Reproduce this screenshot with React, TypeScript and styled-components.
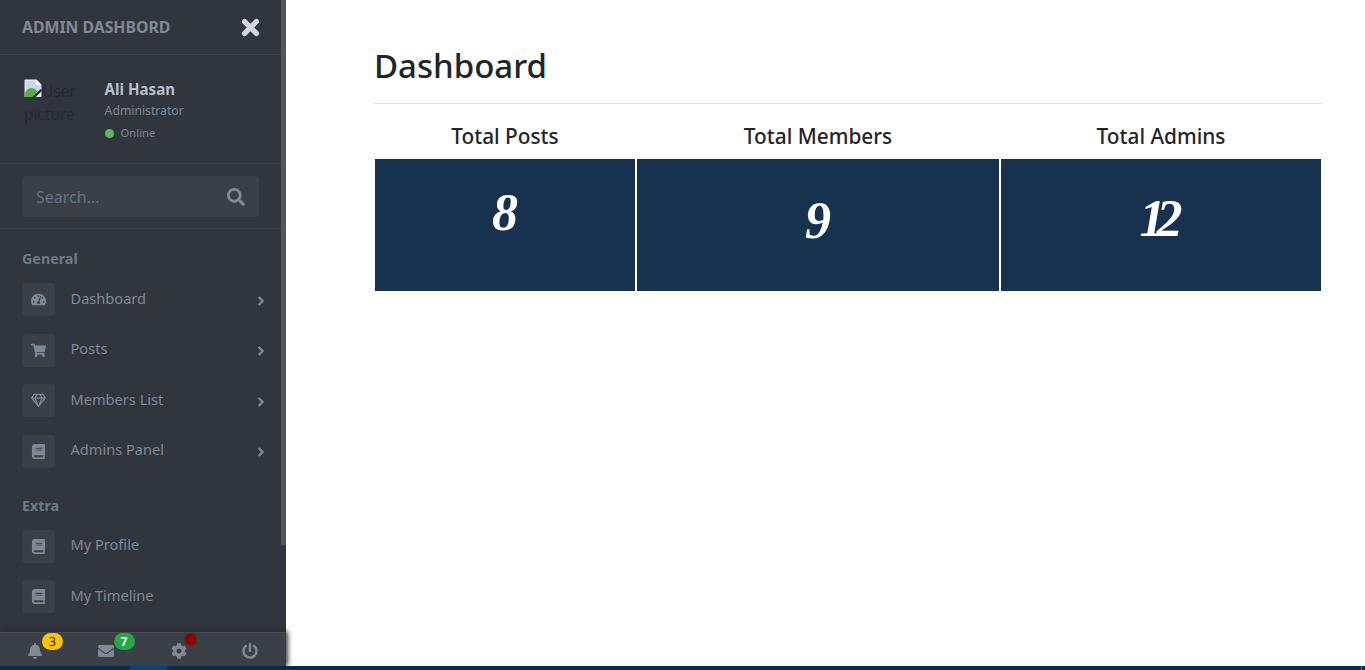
import React from "react";
import styled, { createGlobalStyle } from "styled-components";
import {
  FaBell, FaBook, FaChevronRight, FaCog, FaEnvelope, FaRegGem, FaPowerOff,
  FaSearch, FaShoppingCart, FaTachometerAlt,
} from "react-icons/fa";

const Global = createGlobalStyle`
  html, body { margin: 0; padding: 0; height: 100%; overflow: hidden; background: #fff; }
  body { font-family: "Noto Sans", "Open Sans", sans-serif; color: #212529; }
  #root { height: 100%; }
  * { box-sizing: border-box; }
`;

const Page = styled.div`
  display: flex;
  flex-direction: column;
  height: 670px;
`;
const Body = styled.div`
  display: flex;
  flex: 1;
  min-height: 0;
`;
const Sidebar = styled.aside`
  width: 286px;
  flex: none;
  display: flex;
  flex-direction: column;
  background: #31353d;
  position: relative;
`;
const ScrollArea = styled.div`
  flex: 1;
  min-height: 0;
  display: flex;
`;
const SideContent = styled.div`
  width: 281px;
  flex: none;
`;
const Track = styled.div`
  width: 5px;
  flex: none;
`;
const Thumb = styled.div`
  height: 545px;
  background: #525965;
`;
const Brand = styled.div`
  height: 55px;
  padding: 0 26px 0 22px;
  display: flex;
  align-items: center;
  justify-content: space-between;
  border-bottom: 1px solid #3a3f48;
  margin-right: -5px;
`;
const BrandName = styled.span`
  font-size: 15.8px;
  font-weight: 700;
  color: #818896;
`;
const CloseIcon = styled.svg`
  width: 19px;
  height: 19px;
  display: block;
`;
const UserPanel = styled.div`
  height: 109px;
  padding: 24px 0 0 24px;
  display: flex;
  border-bottom: 1px solid #3a3f48;
  margin-right: -5px;
`;
const Avatar = styled.div`
  width: 59px;
  flex: none;
  margin-right: 21.6px;
  padding-top: 1px;
  font-size: 15.4px;
  line-height: 23px;
  color: #262a30;
  font-weight: 400;
`;
const BrokenIcon = styled.svg`
  width: 18px;
  height: 18px;
  vertical-align: top;
  margin-top: -1px;
`;
const UserInfo = styled.div`
  display: flex;
  flex-direction: column;
`;
const UserName = styled.strong`
  font-size: 15.1px;
  line-height: 20px;
  color: #b8bfce;
`;
const UserRole = styled.span`
  font-size: 12.2px;
  line-height: 17px;
  margin-top: 3px;
  color: #818896;
`;
const UserStatus = styled.span`
  display: flex;
  align-items: center;
  gap: 7px;
  font-size: 11.2px;
  line-height: 16px;
  margin-top: 6px;
  color: #818896;
`;
const StatusDot = styled.i`
  width: 9px;
  height: 9px;
  border-radius: 50%;
  background: #5cb85c;
`;
const SearchPanel = styled.div`
  height: 65px;
  padding: 12px 27px 0 22px;
  border-bottom: 1px solid #3a3f48;
  margin-right: -5px;
`;
const SearchBox = styled.div`
  height: 41px;
  border-radius: 4px;
  background: #3a3f48;
  display: flex;
  align-items: center;
  justify-content: space-between;
  padding: 0 14px;
`;
const SearchHint = styled.span`
  font-size: 16px;
  color: #6a7180;
`;
const SearchIcon = styled.span`
  display: flex;
  font-size: 18px;
  color: #818896;
`;
const MenuHeader = styled.div<{ $top: number }>`
  margin-top: ${(p) => p.$top}px;
  padding-left: 22px;
  height: 20px;
  line-height: 20px;
  font-size: 14.3px;
  font-weight: 700;
  color: #6c7b88;
`;
const MenuList = styled.nav`
  margin-top: 14px;
  display: flex;
  flex-direction: column;
  gap: 17.6px;
`;
const MenuRow = styled.div`
  height: 33px;
  padding: 0 16px 0 22px;
  display: flex;
  align-items: center;
`;
const MenuIcon = styled.span`
  width: 33px;
  height: 33px;
  border-radius: 4px;
  flex: none;
  background: #3a3f48;
  color: #818896;
  display: flex;
  align-items: center;
  justify-content: center;
  font-size: 15px;
`;
const MenuLabel = styled.span`
  flex: 1;
  margin-left: 15.5px;
  margin-top: -4px;
  font-size: 14.6px;
  color: #818896;
`;
const MenuArrow = styled.span`
  display: flex;
  font-size: 10px;
  margin: 2px -1px 0 0;
  color: #818896;
  svg { stroke: currentColor; stroke-width: 50; }
`;
const Footer = styled.footer`
  height: 34px;
  flex: none;
  display: flex;
  background: #3a3f48;
  border-top: 1px solid #464a52;
  box-shadow: 0 -1px 5px #282c33, 2px 0 5px rgba(40, 44, 51, 0.6);
  position: relative;
`;
const FooterItem = styled.div`
  flex: 0 0 25%;
  display: flex;
  align-items: center;
  justify-content: center;
  color: #818896;
  font-size: 16px;
  padding-top: 2px;
  position: relative;
  &:nth-child(-n + 2) { padding-right: 2px; }
`;
const Badge = styled.span<{ $bg: string; $fg: string; $weight: number }>`
  position: absolute;
  top: 0;
  left: 42px;
  width: 21px;
  height: 17px;
  border-radius: 9px;
  background: ${(p) => p.$bg};
  color: ${(p) => p.$fg};
  font-size: 12px;
  font-weight: ${(p) => p.$weight};
  line-height: 17px;
  text-align: center;
`;
const Dot = styled.span`
  position: absolute;
  top: 1px;
  left: 42px;
  width: 11px;
  height: 11px;
  border-radius: 50%;
  background: #8b0000;
  box-shadow: 0 0 2px 1px rgba(139, 0, 0, 0.4);
`;
const Main = styled.main`
  flex: 1;
  min-width: 0;
  padding: 0 43px 0 88px;
`;
const Title = styled.h1`
  margin: 0;
  height: 104px;
  padding: 41px 0 0 0;
  font-size: 33px;
  line-height: 50px;
  font-weight: 500;
  color: #212529;
  border-bottom: 1px solid #e4e4e4;
`;
const Stats = styled.div`
  display: grid;
  grid-template-columns: 260px 362px 320px;
  column-gap: 2px;
  margin-left: 1px;
`;
const StatHead = styled.div`
  height: 55px;
  padding-top: 17px;
  text-align: center;
  font-size: 20.8px;
  line-height: 31px;
  font-weight: 500;
  color: #212529;
`;
const StatCell = styled.div<{ $pad: number; $track?: number }>`
  height: 132px;
  background: #16324f;
  color: #fff;
  text-align: center;
  padding-top: ${(p) => p.$pad}px;
  padding-right: ${(p) => -(p.$track ?? 0)}px;
  font-family: "Liberation Serif", serif;
  font-weight: 700;
  font-style: italic;
  font-size: 52px;
  line-height: 60px;
  letter-spacing: ${(p) => p.$track ?? 0}px;
`;
const Strip = styled.div`
  height: 4px;
  flex: none;
  background: #022c50;
  display: flex;
  position: relative;
`;
const StripActive = styled.div`
  width: 37px;
  margin-left: 130px;
  background: #06447a;
`;
const StripTick = styled.div`
  position: absolute;
  top: 0;
  bottom: 0;
  right: 3px;
  width: 1px;
  background: #5b7f99;
`;

const brokenIcon = (
  <BrokenIcon viewBox="0 0 16 16" aria-hidden>
    <path d="M0.5 0.5H11L15.5 5V16H0.5Z" fill="#e8eaed" />
    <path d="M1.5 1.5H10.5V5.5H14.5V11L1.5 11Z" fill="#c3d9f7" />
    <path d="M1 15V12C3 8 7 7 10 9L12 11L9 16H1Z" fill="#5cae3c" />
    <path d="M15.5 9.5L8.5 16.5" stroke="#26292f" strokeWidth="2" />
    <path d="M11 0.5L15.5 5H11Z" fill="#fff" />
  </BrokenIcon>
);

const general = [
  { label: "Dashboard", icon: <FaTachometerAlt /> },
  { label: "Posts", icon: <FaShoppingCart /> },
  { label: "Members List", icon: <FaRegGem /> },
  { label: "Admins Panel", icon: <FaBook /> },
];
const extra = [
  { label: "My Profile", icon: <FaBook /> },
  { label: "My Timeline", icon: <FaBook /> },
];

export default function App() {
  return (
    <Page>
      <Global />
      <Body>
        <Sidebar>
          <ScrollArea>
            <SideContent>
              <Brand>
                <BrandName>ADMIN DASHBORD</BrandName>
                <CloseIcon viewBox="0 0 19 19" aria-hidden>
                  <path d="M3.6 3.6L15.4 15.4M15.4 3.6L3.6 15.4" stroke="#d3d6db" strokeWidth="5.4" strokeLinecap="round" />
                </CloseIcon>
              </Brand>
              <UserPanel>
                <Avatar>{brokenIcon}User picture</Avatar>
                <UserInfo>
                  <UserName>Ali Hasan</UserName>
                  <UserRole>Administrator</UserRole>
                  <UserStatus><StatusDot />Online</UserStatus>
                </UserInfo>
              </UserPanel>
              <SearchPanel>
                <SearchBox>
                  <SearchHint>Search...</SearchHint>
                  <SearchIcon><FaSearch /></SearchIcon>
                </SearchBox>
              </SearchPanel>
              <MenuHeader $top={20}>General</MenuHeader>
              <MenuList>
                {general.map((m) => (
                  <MenuRow key={m.label}>
                    <MenuIcon>{m.icon}</MenuIcon>
                    <MenuLabel>{m.label}</MenuLabel>
                    <MenuArrow><FaChevronRight /></MenuArrow>
                  </MenuRow>
                ))}
              </MenuList>
              <MenuHeader $top={28}>Extra</MenuHeader>
              <MenuList>
                {extra.map((m) => (
                  <MenuRow key={m.label}>
                    <MenuIcon>{m.icon}</MenuIcon>
                    <MenuLabel>{m.label}</MenuLabel>
                  </MenuRow>
                ))}
              </MenuList>
            </SideContent>
            <Track><Thumb /></Track>
          </ScrollArea>
          <Footer>
            <FooterItem><FaBell /><Badge $bg="#ffc107" $fg="#212529" $weight={400}>3</Badge></FooterItem>
            <FooterItem><FaEnvelope /><Badge $bg="#28a745" $fg="#fff" $weight={700}>7</Badge></FooterItem>
            <FooterItem><FaCog /><Dot /></FooterItem>
            <FooterItem><FaPowerOff /></FooterItem>
          </Footer>
        </Sidebar>
        <Main>
          <Title>Dashboard</Title>
          <Stats>
            <StatHead>Total Posts</StatHead>
            <StatHead>Total Members</StatHead>
            <StatHead>Total Admins</StatHead>
            <StatCell $pad={24}>8</StatCell>
            <StatCell $pad={32}>9</StatCell>
            <StatCell $pad={30} $track={-9}>12</StatCell>
          </Stats>
        </Main>
      </Body>
      <Strip><StripActive /><StripTick /></Strip>
    </Page>
  );
}
